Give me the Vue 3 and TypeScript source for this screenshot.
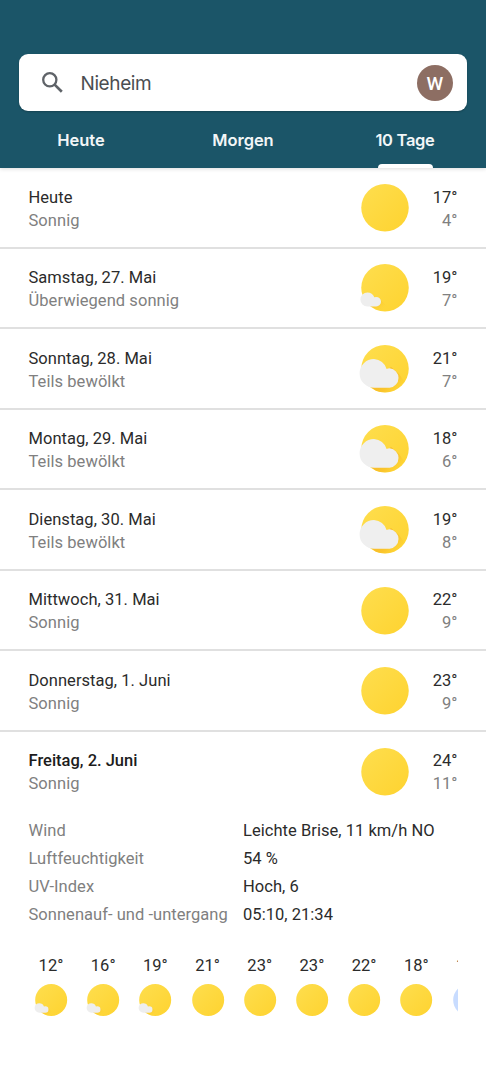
<script setup lang="ts">
type Sky = 'sunny' | 'mostly' | 'partly' | 'night'

interface Day {
  date: string
  text: string
  sky: Sky
  high: number
  low: number
}

const tabs = ['Heute', 'Morgen', '10 Tage']
const activeTab = 2

const days: Day[] = [
  { date: 'Heute', text: 'Sonnig', sky: 'sunny', high: 17, low: 4 },
  { date: 'Samstag, 27. Mai', text: 'Überwiegend sonnig', sky: 'mostly', high: 19, low: 7 },
  { date: 'Sonntag, 28. Mai', text: 'Teils bewölkt', sky: 'partly', high: 21, low: 7 },
  { date: 'Montag, 29. Mai', text: 'Teils bewölkt', sky: 'partly', high: 18, low: 6 },
  { date: 'Dienstag, 30. Mai', text: 'Teils bewölkt', sky: 'partly', high: 19, low: 8 },
  { date: 'Mittwoch, 31. Mai', text: 'Sonnig', sky: 'sunny', high: 22, low: 9 },
  { date: 'Donnerstag, 1. Juni', text: 'Sonnig', sky: 'sunny', high: 23, low: 9 },
  { date: 'Freitag, 2. Juni', text: 'Sonnig', sky: 'sunny', high: 24, low: 11 },
]
const openDay = 7

const details = [
  { label: 'Wind', value: 'Leichte Brise, 11 km/h NO' },
  { label: 'Luftfeuchtigkeit', value: '54 %' },
  { label: 'UV-Index', value: 'Hoch, 6' },
  { label: 'Sonnenauf- und -untergang', value: '05:10, 21:34' },
]

const hours: { temp: number; sky: Sky }[] = [
  { temp: 12, sky: 'mostly' },
  { temp: 16, sky: 'mostly' },
  { temp: 19, sky: 'mostly' },
  { temp: 21, sky: 'sunny' },
  { temp: 23, sky: 'sunny' },
  { temp: 23, sky: 'sunny' },
  { temp: 22, sky: 'sunny' },
  { temp: 18, sky: 'sunny' },
  { temp: 14, sky: 'night' },
]
</script>

<template>
  <div class="screen">
    <svg class="defs" width="0" height="0" aria-hidden="true">
      <defs>
        <linearGradient id="sunFill" x1="0" y1="0" x2="1" y2="1">
          <stop offset="0" stop-color="#fede4e" />
          <stop offset="1" stop-color="#fed330" />
        </linearGradient>
        <linearGradient id="shadeLarge" gradientUnits="userSpaceOnUse" x1="24" y1="28" x2="40" y2="44">
          <stop offset="0" stop-color="#f7bb2a" />
          <stop offset="0.5" stop-color="#fac52d" />
          <stop offset="1" stop-color="#fed02f" stop-opacity="0" />
        </linearGradient>
        <linearGradient id="shadeSmall" gradientUnits="userSpaceOnUse" x1="15" y1="34" x2="24" y2="44">
          <stop offset="0" stop-color="#f6b829" />
          <stop offset="1" stop-color="#fed233" stop-opacity="0" />
        </linearGradient>
        <clipPath id="sunClip"><circle cx="24" cy="23.75" r="23.75" /></clipPath>
        <symbol id="sky-sunny" viewBox="0 0 47.5 47.5" overflow="visible">
          <circle cx="24" cy="23.75" r="23.75" fill="url(#sunFill)" />
        </symbol>
        <symbol id="sky-mostly" viewBox="0 0 47.5 47.5" overflow="visible">
          <circle cx="24" cy="23.75" r="23.75" fill="url(#sunFill)" />
          <path d="M18 34.5 28 44 20 47.5 9 42Z" fill="url(#shadeSmall)" clip-path="url(#sunClip)" />
          <path d="M6.4 28.5a7.4 7.4 0 0 1 6.9 4.8 5 5 0 0 1 1.9-.4 4.8 4.8 0 0 1 0 9.6H6.4a7 7 0 0 1 0-14Z" fill="#eee" />
        </symbol>
        <symbol id="sky-partly" viewBox="0 0 47.5 47.5" overflow="visible">
          <circle cx="24" cy="23.75" r="23.75" fill="url(#sunFill)" />
          <path d="M30 22 38 29 43 36 34 47.5H17L10 42Z" fill="url(#shadeLarge)" clip-path="url(#sunClip)" />
          <path d="M13 14a14.6 14.6 0 0 1 12.6 9.9q1.4-.6 3.1-.6a9.8 9.8 0 0 1 0 19.5H13a14.4 14.4 0 0 1 0-28.8Z" fill="#efefef" />
        </symbol>
        <symbol id="sky-night" viewBox="0 0 47.5 47.5" overflow="visible">
          <circle cx="24" cy="23.75" r="23.75" fill="#c8dcff" />
        </symbol>
      </defs>
    </svg>

    <header class="header">
      <div class="search">
        <svg class="lens" viewBox="0 0 21 21">
          <circle cx="7.8" cy="7.8" r="6.6" fill="none" stroke="#5f6368" stroke-width="2.3" />
          <path d="M12.4 12.4 19.8 19.8" stroke="#5f6368" stroke-width="2.7" />
        </svg>
        <span class="place">Nieheim</span>
        <span class="avatar">W</span>
      </div>
      <nav class="tabs">
        <div v-for="(tab, i) in tabs" :key="tab" class="tab" :class="{ active: i === activeTab }">
          <span>{{ tab }}</span>
        </div>
      </nav>
    </header>

    <main>
      <section v-for="(day, i) in days" :key="day.date" class="day" :class="{ open: i === openDay }">
        <div class="info">
          <div class="date">{{ day.date }}</div>
          <div class="muted">{{ day.text }}</div>
        </div>
        <svg class="sky"><use :href="`#sky-${day.sky}`" width="47.5" height="47.5" /></svg>
        <div class="temps">
          <div>{{ day.high }}°</div>
          <div class="muted">{{ day.low }}°</div>
        </div>
      </section>

      <dl class="details">
        <template v-for="d in details" :key="d.label">
          <dt class="muted">{{ d.label }}</dt>
          <dd>{{ d.value }}</dd>
        </template>
      </dl>

      <div class="hours">
        <div v-for="(h, i) in hours" :key="i" class="hour">
          <span>{{ h.temp }}°</span>
          <svg class="hour-sky"><use :href="`#sky-${h.sky}`" width="32" height="32" /></svg>
        </div>
      </div>
    </main>
  </div>
</template>

<style>
body {
  background: #fff;
}
</style>

<style scoped>
.screen {
  width: 486px;
  height: 1080px;
  overflow: hidden;
  background: #fff;
  color: #2b2b2b;
  font: 16.5px/23px Roboto, sans-serif;
  letter-spacing: 0.04px;
}
.defs {
  display: block;
}
.header {
  box-sizing: border-box;
  height: 168px;
  padding-top: 54.3px;
  background: #1b5568;
  box-shadow: 0 1px 4px rgba(0, 0, 0, 0.14);
}
.search {
  display: flex;
  align-items: center;
  box-sizing: border-box;
  height: 56.7px;
  margin: 0 19px;
  padding: 0 14px 0 22.5px;
  border-radius: 9px;
  background: #fff;
  box-shadow: 0 1px 2px rgba(0, 0, 0, 0.22);
}
.lens {
  width: 21px;
  height: 21px;
}
.place {
  flex: 1;
  margin-left: 18px;
  padding-top: 2px;
  color: #4b4e51;
  font: 400 19px/24px Inter, sans-serif;
  letter-spacing: -0.4px;
}
.avatar {
  width: 36px;
  height: 36px;
  border-radius: 50%;
  background: #8d6e63;
  color: #fff;
  font: 500 19px/37px Roboto, sans-serif;
  text-align: center;
}
.tabs {
  display: flex;
  height: 57px;
}
.tab {
  position: relative;
  flex: 1;
  color: #f2f6f7;
  font: 600 16.5px/58px Inter, sans-serif;
  letter-spacing: -0.05px;
  text-align: center;
}
.tab.active {
  letter-spacing: -0.3px;
}
.tab.active::after {
  content: '';
  position: absolute;
  left: 50%;
  bottom: 0;
  width: 55px;
  height: 4px;
  margin-left: -27.5px;
  border-radius: 4px 4px 0 0;
  background: #fff;
}
.day {
  display: flex;
  box-sizing: border-box;
  height: 80.55px;
  padding: 17.6px 28.5px 0 28.5px;
  border-bottom: 2px solid #e0e0e0;
}
.day.open {
  border-bottom-color: transparent;
}
.info {
  flex: 1;
}
.open .date {
  color: #1c1c1c;
  font-weight: 500;
  letter-spacing: 0;
}
.muted {
  color: #808080;
}
.info .muted {
  letter-spacing: 0.06px;
}
.sky {
  width: 47.5px;
  height: 47.5px;
  margin-top: -1.8px;
  overflow: visible;
}
.temps {
  width: 48.8px;
  text-align: right;
}
.details {
  display: grid;
  grid-template-columns: 214.5px 1fr;
  margin: 4.7px 0 0 28.5px;
  line-height: 28px;
}
.details dd {
  margin: 0;
}
.hours {
  display: flex;
  gap: 7.2px;
  margin: 24.5px 28px 0 28.5px;
  overflow: hidden;
}
.hour {
  display: flex;
  flex: 0 0 45px;
  flex-direction: column;
  align-items: center;
  gap: 7px;
}
.hour-sky {
  width: 32px;
  height: 32px;
  overflow: visible;
}
</style>
